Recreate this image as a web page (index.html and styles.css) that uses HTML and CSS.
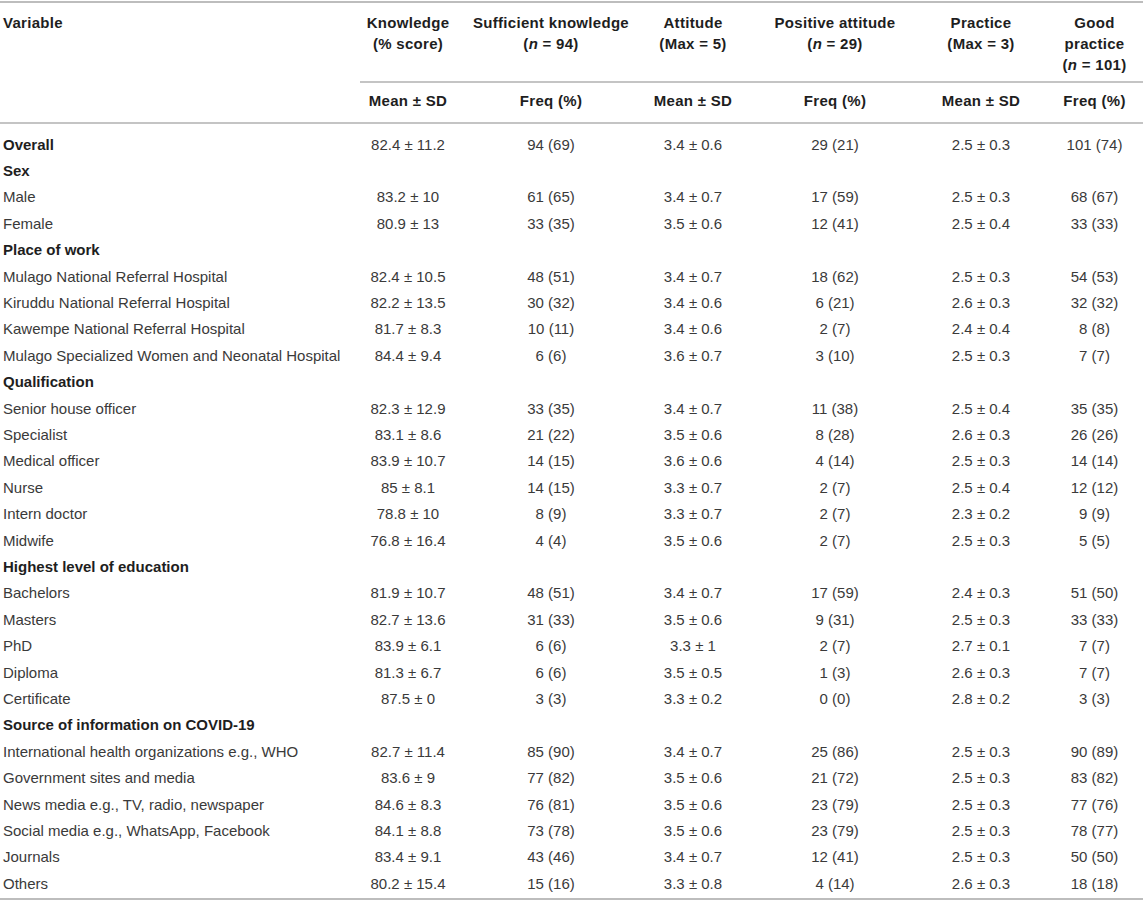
FILE: index.html
```html
<!DOCTYPE html>
<html lang="en">
<head>
<meta charset="utf-8">
<title>Table</title>
<link rel="stylesheet" href="styles.css">
</head>
<body>
<table class="kap">
  <colgroup>
    <col class="c0"><col class="c1"><col class="c2"><col class="c3"><col class="c4"><col class="c5"><col class="c6">
  </colgroup>
  <thead>
    <tr class="h1">
      <th class="var">Variable</th>
      <th>Knowledge<br>(% score)</th>
      <th>Sufficient knowledge<br>(<i>n</i> = 94)</th>
      <th>Attitude<br>(Max = 5)</th>
      <th>Positive attitude<br>(<i>n</i> = 29)</th>
      <th>Practice<br>(Max = 3)</th>
      <th class="last">Good<br>practice<br>(<i>n</i> = 101)</th>
    </tr>
    <tr class="h2">
      <th class="var empty"></th>
      <th>Mean ± SD</th>
      <th>Freq (%)</th>
      <th>Mean ± SD</th>
      <th>Freq (%)</th>
      <th>Mean ± SD</th>
      <th class="last">Freq (%)</th>
    </tr>
  </thead>
  <tbody>
    <tr class="first grp"><td>Overall</td><td>82.4 ± 11.2</td><td>94 (69)</td><td>3.4 ± 0.6</td><td>29 (21)</td><td>2.5 ± 0.3</td><td class="last">101 (74)</td></tr>
    <tr class="grp"><td>Sex</td><td></td><td></td><td></td><td></td><td></td><td class="last"></td></tr>
    <tr><td>Male</td><td>83.2 ± 10</td><td>61 (65)</td><td>3.4 ± 0.7</td><td>17 (59)</td><td>2.5 ± 0.3</td><td class="last">68 (67)</td></tr>
    <tr><td>Female</td><td>80.9 ± 13</td><td>33 (35)</td><td>3.5 ± 0.6</td><td>12 (41)</td><td>2.5 ± 0.4</td><td class="last">33 (33)</td></tr>
    <tr class="grp"><td>Place of work</td><td></td><td></td><td></td><td></td><td></td><td class="last"></td></tr>
    <tr><td>Mulago National Referral Hospital</td><td>82.4 ± 10.5</td><td>48 (51)</td><td>3.4 ± 0.7</td><td>18 (62)</td><td>2.5 ± 0.3</td><td class="last">54 (53)</td></tr>
    <tr><td>Kiruddu National Referral Hospital</td><td>82.2 ± 13.5</td><td>30 (32)</td><td>3.4 ± 0.6</td><td>6 (21)</td><td>2.6 ± 0.3</td><td class="last">32 (32)</td></tr>
    <tr><td>Kawempe National Referral Hospital</td><td>81.7 ± 8.3</td><td>10 (11)</td><td>3.4 ± 0.6</td><td>2 (7)</td><td>2.4 ± 0.4</td><td class="last">8 (8)</td></tr>
    <tr><td>Mulago Specialized Women and Neonatal Hospital</td><td>84.4 ± 9.4</td><td>6 (6)</td><td>3.6 ± 0.7</td><td>3 (10)</td><td>2.5 ± 0.3</td><td class="last">7 (7)</td></tr>
    <tr class="grp"><td>Qualification</td><td></td><td></td><td></td><td></td><td></td><td class="last"></td></tr>
    <tr><td>Senior house officer</td><td>82.3 ± 12.9</td><td>33 (35)</td><td>3.4 ± 0.7</td><td>11 (38)</td><td>2.5 ± 0.4</td><td class="last">35 (35)</td></tr>
    <tr><td>Specialist</td><td>83.1 ± 8.6</td><td>21 (22)</td><td>3.5 ± 0.6</td><td>8 (28)</td><td>2.6 ± 0.3</td><td class="last">26 (26)</td></tr>
    <tr><td>Medical officer</td><td>83.9 ± 10.7</td><td>14 (15)</td><td>3.6 ± 0.6</td><td>4 (14)</td><td>2.5 ± 0.3</td><td class="last">14 (14)</td></tr>
    <tr><td>Nurse</td><td>85 ± 8.1</td><td>14 (15)</td><td>3.3 ± 0.7</td><td>2 (7)</td><td>2.5 ± 0.4</td><td class="last">12 (12)</td></tr>
    <tr><td>Intern doctor</td><td>78.8 ± 10</td><td>8 (9)</td><td>3.3 ± 0.7</td><td>2 (7)</td><td>2.3 ± 0.2</td><td class="last">9 (9)</td></tr>
    <tr><td>Midwife</td><td>76.8 ± 16.4</td><td>4 (4)</td><td>3.5 ± 0.6</td><td>2 (7)</td><td>2.5 ± 0.3</td><td class="last">5 (5)</td></tr>
    <tr class="grp"><td>Highest level of education</td><td></td><td></td><td></td><td></td><td></td><td class="last"></td></tr>
    <tr><td>Bachelors</td><td>81.9 ± 10.7</td><td>48 (51)</td><td>3.4 ± 0.7</td><td>17 (59)</td><td>2.4 ± 0.3</td><td class="last">51 (50)</td></tr>
    <tr><td>Masters</td><td>82.7 ± 13.6</td><td>31 (33)</td><td>3.5 ± 0.6</td><td>9 (31)</td><td>2.5 ± 0.3</td><td class="last">33 (33)</td></tr>
    <tr><td>PhD</td><td>83.9 ± 6.1</td><td>6 (6)</td><td>3.3 ± 1</td><td>2 (7)</td><td>2.7 ± 0.1</td><td class="last">7 (7)</td></tr>
    <tr><td>Diploma</td><td>81.3 ± 6.7</td><td>6 (6)</td><td>3.5 ± 0.5</td><td>1 (3)</td><td>2.6 ± 0.3</td><td class="last">7 (7)</td></tr>
    <tr><td>Certificate</td><td>87.5 ± 0</td><td>3 (3)</td><td>3.3 ± 0.2</td><td>0 (0)</td><td>2.8 ± 0.2</td><td class="last">3 (3)</td></tr>
    <tr class="grp"><td>Source of information on COVID-19</td><td></td><td></td><td></td><td></td><td></td><td class="last"></td></tr>
    <tr><td>International health organizations e.g., WHO</td><td>82.7 ± 11.4</td><td>85 (90)</td><td>3.4 ± 0.7</td><td>25 (86)</td><td>2.5 ± 0.3</td><td class="last">90 (89)</td></tr>
    <tr><td>Government sites and media</td><td>83.6 ± 9</td><td>77 (82)</td><td>3.5 ± 0.6</td><td>21 (72)</td><td>2.5 ± 0.3</td><td class="last">83 (82)</td></tr>
    <tr><td>News media e.g., TV, radio, newspaper</td><td>84.6 ± 8.3</td><td>76 (81)</td><td>3.5 ± 0.6</td><td>23 (79)</td><td>2.5 ± 0.3</td><td class="last">77 (76)</td></tr>
    <tr><td>Social media e.g., WhatsApp, Facebook</td><td>84.1 ± 8.8</td><td>73 (78)</td><td>3.5 ± 0.6</td><td>23 (79)</td><td>2.5 ± 0.3</td><td class="last">78 (77)</td></tr>
    <tr><td>Journals</td><td>83.4 ± 9.1</td><td>43 (46)</td><td>3.4 ± 0.7</td><td>12 (41)</td><td>2.5 ± 0.3</td><td class="last">50 (50)</td></tr>
    <tr class="final"><td>Others</td><td>80.2 ± 15.4</td><td>15 (16)</td><td>3.3 ± 0.8</td><td>4 (14)</td><td>2.6 ± 0.3</td><td class="last">18 (18)</td></tr>
  </tbody>
</table>
</body>
</html>
```
FILE: styles.css
```css
html, body {
  margin: 0;
  padding: 0;
  background: #ffffff;
}

body {
  padding-top: 1px;
  font-family: "Liberation Sans", Arial, Helvetica, sans-serif;
  font-size: 15px;
  color: #3a3a3a;
}

.kap {
  width: 1143px;
  border-collapse: collapse;
  table-layout: fixed;
  border-top: 2px solid #bdbdbd;
  border-bottom: 2px solid #bdbdbd;
}

.c0 { width: 360px; }
.c1 { width: 96px; }
.c2 { width: 190px; }
.c3 { width: 94px; }
.c4 { width: 190px; }
.c5 { width: 102px; }
.c6 { width: 111px; }

.kap th {
  font-weight: bold;
  color: #1e1e1e;
  text-align: center;
  vertical-align: top;
  line-height: 21px;
  padding: 0 1px;
  letter-spacing: 0.3px;
  white-space: nowrap;
}

.kap th.var {
  text-align: left;
  padding-left: 3px;
}

.h1 th {
  padding-top: 9px;
  padding-bottom: 6px;
  border-bottom: 2px solid #c4c4c4;
}

.h1 th.var {
  border-bottom: none;
}

.h2 th {
  padding-top: 7px;
  padding-bottom: 11px;
  border-bottom: 2px solid #c4c4c4;
}

.kap td {
  text-align: center;
  line-height: 20.4px;
  padding: 3px 2px;
  white-space: nowrap;
}

.kap td:first-child {
  text-align: left;
  padding-left: 3px;
}

.kap .last {
  padding-left: 14px;
  padding-right: 0;
}

.kap tr.first td {
  padding-top: 10.5px;
}

.kap tr.final td {
  padding-bottom: 4px;
}

.kap tr.grp td:first-child {
  font-weight: bold;
  color: #1e1e1e;
}

.kap i {
  font-style: italic;
}
```
